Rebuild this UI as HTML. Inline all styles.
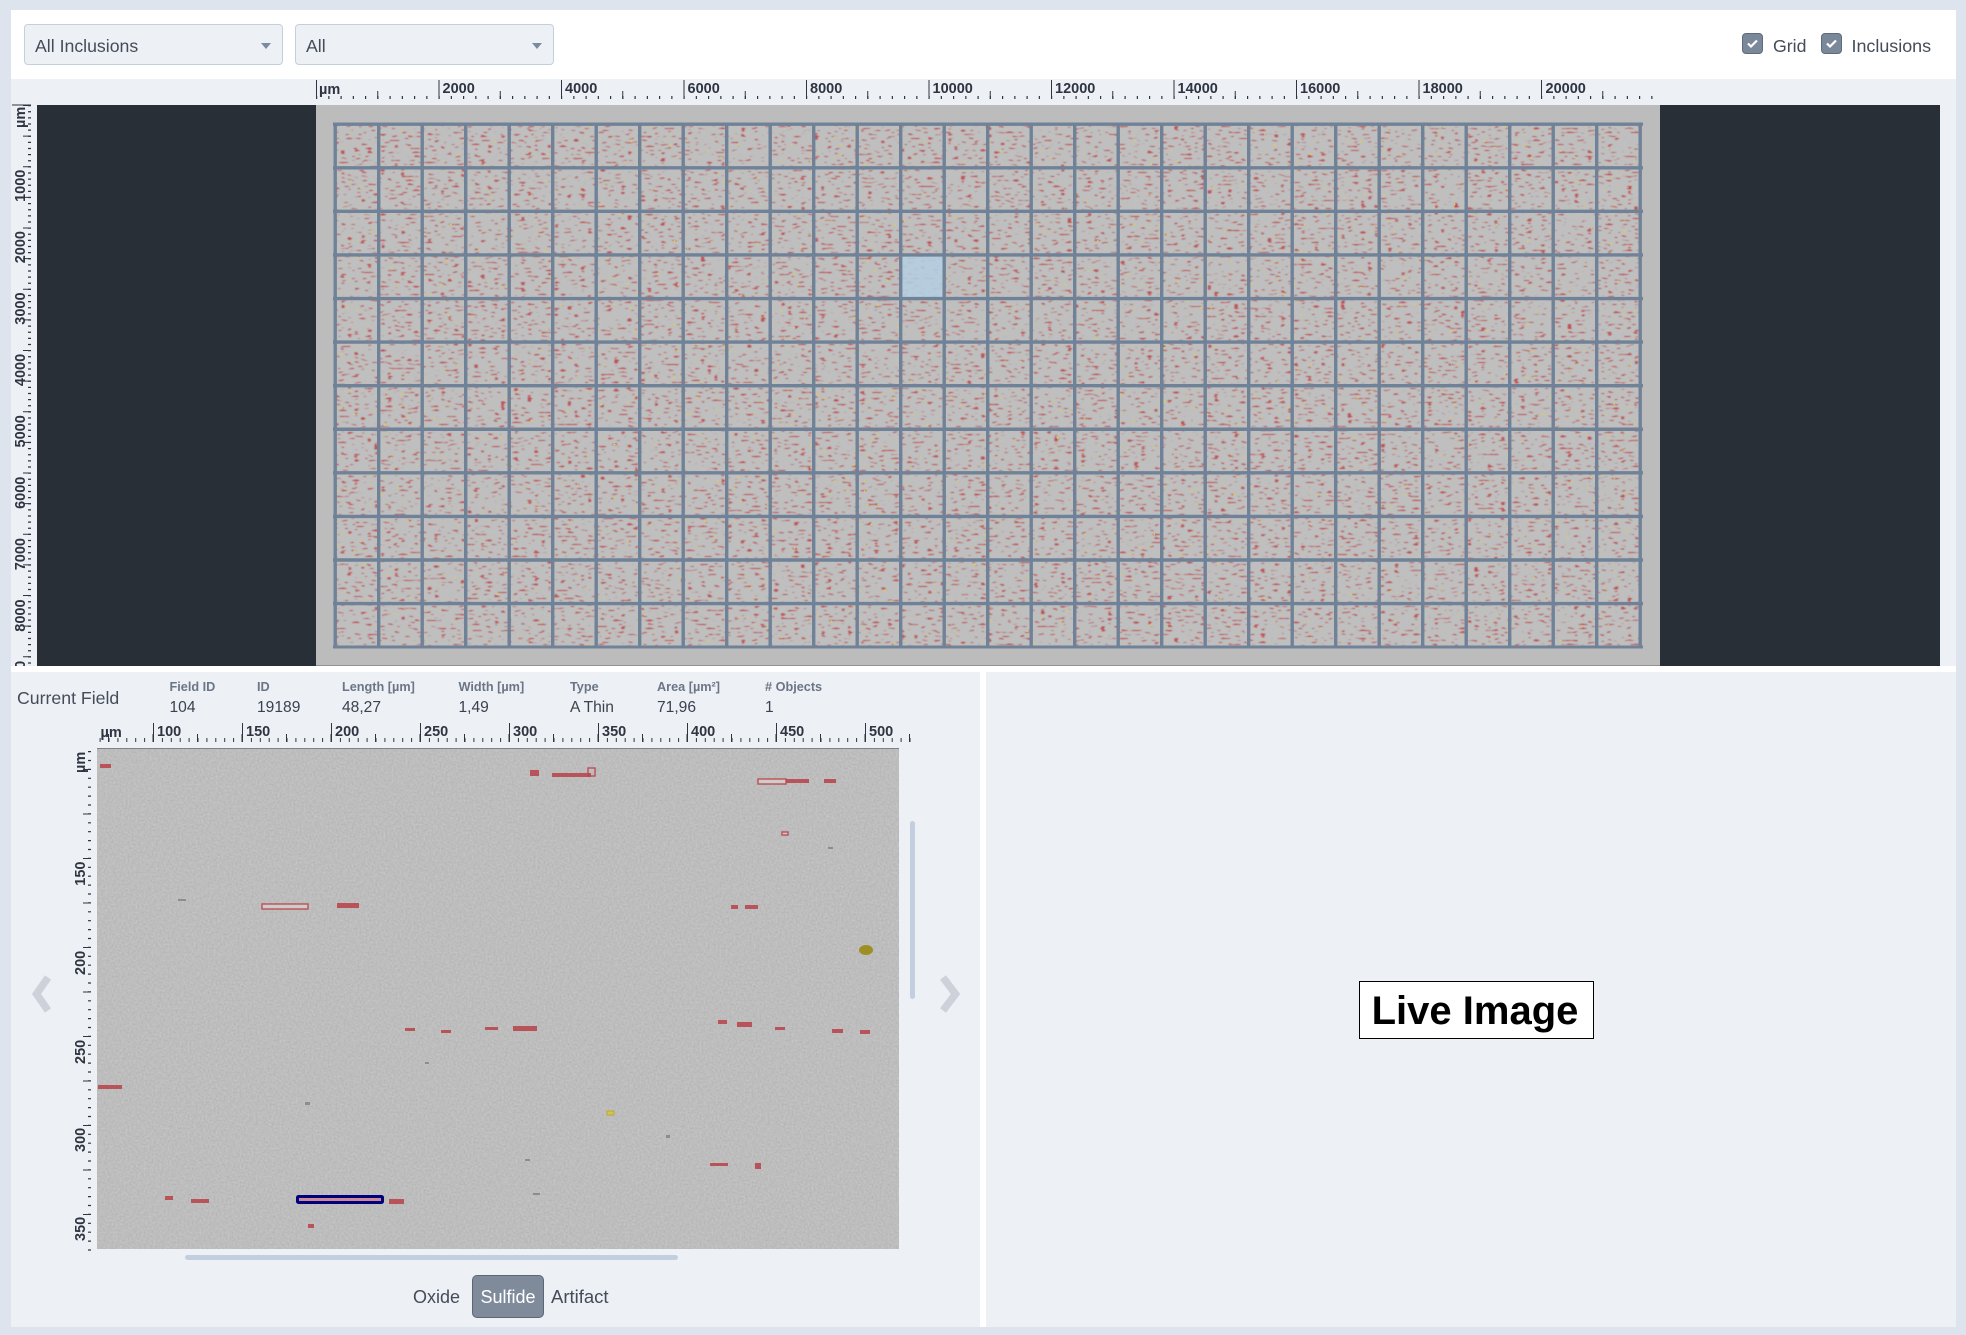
<!DOCTYPE html>
<html><head><meta charset="utf-8"><title>Inclusions</title>
<style>
html,body{margin:0;padding:0;background:#dee4ee}
body{position:relative;width:1966px;height:1335px;overflow:hidden;font-family:"Liberation Sans",sans-serif;color:#3f4752}
.a{position:absolute;white-space:nowrap}
.sel{position:absolute;top:24px;height:39px;width:257px;background:#edf1f6;border:1px solid #c3cfdf;border-radius:4px;font-size:17.7px;line-height:43px;text-indent:10px;color:#444c58}
.sel i{position:absolute;right:11px;top:18px;border-left:5px solid transparent;border-right:5px solid transparent;border-top:6px solid #7b8a9f}
.cb{position:absolute;top:33px;width:19px;height:19px;background:#7b889a;border:1px solid #5f6b7c;border-radius:4px}
.cb svg{position:absolute;left:3px;top:4px}
.h{font-size:12.7px;font-weight:bold;color:#6b7585;top:680px}
.v{font-size:15.6px;color:#3a424e;top:699px}
svg text{font-family:"Liberation Sans",sans-serif;font-weight:bold;font-size:14.5px;fill:#2e3440}
</style></head><body>
<div class="a" style="left:11px;top:10px;width:1945px;height:69px;background:#fff"></div>
<div class="a" style="left:11px;top:79px;width:1945px;height:587px;background:#edf1f6"></div>
<div class="a" style="left:11px;top:666px;width:1945px;height:6px;background:#fff"></div>
<div class="a" style="left:11px;top:672px;width:969px;height:655px;background:#edf1f6"></div>
<div class="a" style="left:986px;top:672px;width:970px;height:655px;background:#edf1f6"></div>
<div class="a" style="left:980px;top:672px;width:6px;height:655px;background:#fff"></div>

<div class="sel" style="left:24px">All Inclusions<i></i></div>
<div class="sel" style="left:295px">All<i></i></div>
<div class="cb" style="left:1742px"><svg width="13" height="11" viewBox="0 0 13 11"><path d="M2 5.5L5 8.5L11 2.5" fill="none" stroke="#fff" stroke-width="2.2"/></svg></div>
<div class="a" style="left:1773px;top:36px;font-size:17.7px;color:#444c58">Grid</div>
<div class="cb" style="left:1821px"><svg width="13" height="11" viewBox="0 0 13 11"><path d="M2 5.5L5 8.5L11 2.5" fill="none" stroke="#fff" stroke-width="2.2"/></svg></div>
<div class="a" style="left:1851.5px;top:36px;font-size:17.9px;color:#444c58">Inclusions</div>

<svg class="a" style="left:0;top:0" width="1966" height="1335" viewBox="0 0 1966 1335">
<defs>
<filter id="sp" x="0" y="0" width="100%" height="100%" color-interpolation-filters="sRGB">
<feTurbulence type="fractalNoise" baseFrequency="0.15 0.5" numOctaves="1" seed="11"/>
<feColorMatrix values="0 0 0 0 .75  0 0 0 0 .32  0 0 0 0 .33  12 0 0 0 -7.55"/>
<feGaussianBlur stdDeviation="0.4"/>
</filter>
<filter id="yl" x="0" y="0" width="100%" height="100%" color-interpolation-filters="sRGB">
<feTurbulence type="fractalNoise" baseFrequency="0.3 0.3" numOctaves="1" seed="5"/>
<feColorMatrix values="0 0 0 0 .86  0 0 0 0 .80  0 0 0 0 .35  20 0 0 0 -14.4"/>
</filter>
<filter id="nz" x="0" y="0" width="100%" height="100%" color-interpolation-filters="sRGB">
<feTurbulence type="fractalNoise" baseFrequency="0.5" numOctaves="1" seed="3"/>
<feColorMatrix values="0 0 0 0 .6  0 0 0 0 .6  0 0 0 0 .6  .6 0 0 0 -.1"/>
</filter>
<clipPath id="c1"><rect x="0" y="100" width="40" height="566"/></clipPath>
</defs>

<!-- main map -->
<rect x="37" y="105" width="1903" height="561" fill="#282f37"/>
<rect x="316" y="105" width="1344" height="561" fill="#bcbcbc"/>
<rect x="316" y="665" width="1344" height="1" fill="#8f9296"/>
<rect x="335" y="124" width="1306" height="523" fill="#bfbfbf"/>
<rect x="335" y="124" width="1306" height="523" filter="url(#sp)"/>
<rect x="335" y="124" width="1306" height="523" filter="url(#yl)"/>
<rect x="900.5" y="255" width="43.5" height="43.6" fill="#b3cfe2" fill-opacity=".85"/>
<line x1="333.5" x2="1642.5" y1="385.5" y2="385.5" stroke="#6f8297" stroke-width="526" stroke-dasharray="3.4 40.1"/>
<line x1="988" x2="988" y1="122.5" y2="648.5" stroke="#6f8297" stroke-width="1310" stroke-dasharray="3.4 40.18"/>

<!-- big top ruler -->
<g fill="none" stroke="#2e3440">
<line x1="316" x2="1653" y1="97.5" y2="97.5" stroke-width="3" stroke-dasharray="1.2 11.05"/>
<line x1="316" x2="1653" y1="95" y2="95" stroke-width="8" stroke-dasharray="1 60.25"/>
<line x1="316" x2="1653" y1="89.5" y2="89.5" stroke-width="19" stroke-dasharray="1 121.5"/>
<!-- big left ruler -->
<line x1="29.5" x2="29.5" y1="105" y2="666" stroke-width="3" stroke-dasharray="1.2 4.925"/>
<line x1="27" x2="27" y1="105" y2="666" stroke-width="8" stroke-dasharray="1 29.625"/>
<line x1="12" x2="31" y1="105" y2="105" stroke-width="1"/>
<!-- small top ruler -->
<line x1="99.6" x2="918" y1="740" y2="740" stroke-width="4" stroke-dasharray="1 7.9"/>
<line x1="108" x2="918" y1="738" y2="738" stroke-width="8" stroke-dasharray="1 43.5"/>
<line x1="153" x2="918" y1="732.5" y2="732.5" stroke-width="19" stroke-dasharray="1 88"/>
<!-- small left ruler -->
<line x1="89.5" x2="89.5" y1="751" y2="1258" stroke-width="3" stroke-dasharray="1.2 7.7"/>
<line x1="87" x2="87" y1="769" y2="1258" stroke-width="8" stroke-dasharray="1 43.5"/>
</g>
<g>
<text x="319" y="94">µm</text><text x="442.5" y="93">2000</text><text x="565" y="93">4000</text><text x="687.5" y="93">6000</text><text x="810" y="93">8000</text><text x="932.5" y="93">10000</text><text x="1055" y="93">12000</text><text x="1177.5" y="93">14000</text><text x="1300" y="93">16000</text><text x="1422.5" y="93">18000</text><text x="1545.5" y="93">20000</text>
<text x="100.5" y="737">µm</text><text x="157" y="736">100</text><text x="246" y="736">150</text><text x="335" y="736">200</text><text x="424" y="736">250</text><text x="513" y="736">300</text><text x="602" y="736">350</text><text x="691" y="736">400</text><text x="780" y="736">450</text><text x="869" y="736">500</text>
</g>
<g clip-path="url(#c1)">
<text transform="translate(25 128) rotate(-90)">µm</text>
<text transform="translate(25 201.9) rotate(-90)">1000</text>
<text transform="translate(25 263.3) rotate(-90)">2000</text>
<text transform="translate(25 324.7) rotate(-90)">3000</text>
<text transform="translate(25 386.1) rotate(-90)">4000</text>
<text transform="translate(25 447.5) rotate(-90)">5000</text>
<text transform="translate(25 508.9) rotate(-90)">6000</text>
<text transform="translate(25 570.3) rotate(-90)">7000</text>
<text transform="translate(25 631.7) rotate(-90)">8000</text>
<text transform="translate(25 693.1) rotate(-90)">9000</text>
</g>
<text transform="translate(85 773) rotate(-90)">µm</text>
<text transform="translate(85 885.7) rotate(-90)">150</text>
<text transform="translate(85 975) rotate(-90)">200</text>
<text transform="translate(85 1064) rotate(-90)">250</text>
<text transform="translate(85 1152) rotate(-90)">300</text>
<text transform="translate(85 1241) rotate(-90)">350</text>

<!-- field image -->
<rect x="97" y="748" width="802" height="501" fill="#c6c6c6"/>
<rect x="97" y="748" width="802" height="501" filter="url(#nz)"/>
<rect x="97" y="748" width="802" height="1" fill="#7d8288"/>
<g fill="#b8444c" fill-opacity=".88">
<rect x="100" y="764" width="11" height="4"/><rect x="530" y="770" width="9" height="6"/><rect x="552" y="773" width="39" height="4"/>
<rect x="337" y="903" width="22" height="5"/><rect x="786" y="779" width="23" height="4"/><rect x="824" y="779" width="12" height="4"/>
<rect x="731" y="905" width="7" height="4"/><rect x="405" y="1028" width="10" height="3"/><rect x="441" y="1030" width="10" height="3"/>
<rect x="513" y="1026" width="24" height="5"/><rect x="718" y="1020" width="9" height="4"/><rect x="775" y="1027" width="10" height="3"/>
<rect x="832" y="1029" width="11" height="4"/><rect x="860" y="1030" width="10" height="4"/><rect x="98" y="1085" width="24" height="4"/>
<rect x="710" y="1163" width="18" height="3"/><rect x="755" y="1163" width="6" height="6"/><rect x="165" y="1196" width="8" height="4"/>
<rect x="191" y="1199" width="18" height="4"/><rect x="308" y="1224" width="6" height="4"/>
<rect x="745" y="905" width="13" height="4"/><rect x="737" y="1022" width="15" height="5"/><rect x="485" y="1027" width="13" height="3"/><rect x="389" y="1199" width="15" height="5"/>
</g>
<g fill="#d0cccc" stroke="#b8444c" stroke-width="1.5" stroke-opacity=".85">
<rect x="262" y="904" width="46" height="5"/><rect x="758" y="779" width="28" height="5"/><rect x="782" y="832" width="6" height="3"/><rect x="588" y="768" width="7" height="8" fill="none"/>
</g>
<rect x="297.5" y="1196.5" width="85" height="6" rx="1" fill="#c98a94" stroke="#00007f" stroke-width="3"/>
<rect x="607" y="1111" width="7" height="4" fill="#d3c44a" stroke="#b8a93a"/>
<ellipse cx="866" cy="950" rx="7" ry="5" fill="#9d8f22"/>
<g fill="#8d8d8d"><rect x="178" y="899" width="8" height="2"/><rect x="305" y="1102" width="5" height="3"/><rect x="533" y="1193" width="7" height="2"/><rect x="525" y="1159" width="5" height="2"/><rect x="666" y="1135" width="4" height="3"/><rect x="425" y="1062" width="4" height="2"/><rect x="828" y="847" width="5" height="2"/></g>

<!-- scrollbars and chevrons -->
<rect x="185" y="1255" width="493" height="5" rx="2.5" fill="#c3cfdf"/>
<rect x="910" y="821" width="5" height="178" rx="2.5" fill="#c3cfdf"/>
<path d="M48 977.5L36.5 994L48 1010.5" fill="none" stroke="#cdd2da" stroke-width="7.5"/>
<path d="M943 977.5L955.5 994L943 1010.5" fill="none" stroke="#cdd2da" stroke-width="7.5"/>
</svg>

<div class="a" style="left:17px;top:688px;font-size:17.7px;color:#444c58">Current Field</div>
<div class="a h" style="left:169.5px">Field ID</div><div class="a v" style="left:169.5px">104</div>
<div class="a h" style="left:257px">ID</div><div class="a v" style="left:257px">19189</div>
<div class="a h" style="left:342px">Length [µm]</div><div class="a v" style="left:342px">48,27</div>
<div class="a h" style="left:458.5px">Width [µm]</div><div class="a v" style="left:458.5px">1,49</div>
<div class="a h" style="left:570px">Type</div><div class="a v" style="left:570px">A Thin</div>
<div class="a h" style="left:657px">Area [µm²]</div><div class="a v" style="left:657px">71,96</div>
<div class="a h" style="left:765px"># Objects</div><div class="a v" style="left:765px">1</div>

<div class="a" style="left:413px;top:1287px;font-size:18px;color:#444c58">Oxide</div>
<div class="a" style="left:472px;top:1275px;width:70px;height:41px;background:#7f8b9b;border:1px solid #5c6675;border-radius:5px;color:#fff;font-size:18px;line-height:43px;text-align:center">Sulfide</div>
<div class="a" style="left:551px;top:1286px;font-size:18.5px;color:#444c58">Artifact</div>

<div class="a" style="left:1359px;top:981px;width:233px;height:56px;background:#fff;border:1px solid #000;color:#000;font-weight:bold;font-size:40px;line-height:58px;text-align:center;text-indent:-3px">Live Image</div>
</body></html>
